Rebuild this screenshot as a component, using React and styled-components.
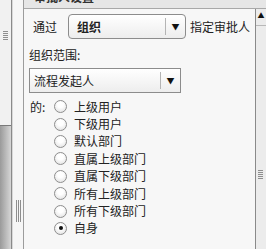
import React from "react";
import styled, { createGlobalStyle } from "styled-components";

const Global = createGlobalStyle`
  html, body { margin: 0; padding: 0; background: #f7f7f7; }
  body { font-family: "Noto Sans CJK SC", "Noto Sans", sans-serif; }
`;

const Frame = styled.div`
  width: 266px;
  height: 249px;
  display: flex;
  overflow: hidden;
  font-size: 12px;
  color: #222;
`;

const LeftDock = styled.div`
  width: 11px;
  display: flex;
  flex-direction: column;
  border-right: 1px solid #8a8a8a;
`;

const DockPanel = styled.div`
  height: 125px;
  background: #f1f1f1;
  border-bottom: 1px solid #7a7a7a;
  position: relative;
`;

const DockRest = styled.div`
  flex: 1;
  background: linear-gradient(to right, #9a9a9a, #d6d6d6);
`;

const GripH = styled.div`
  position: absolute;
  left: ${(p) => p.$x}px;
  top: ${(p) => p.$y}px;
  width: ${(p) => p.$w}px;
  height: 9px;
  background: repeating-linear-gradient(to bottom, #8e8e8e 0 1px, transparent 1px 2px);
`;

const GripV = styled.div`
  position: absolute;
  left: ${(p) => p.$x}px;
  top: ${(p) => p.$y}px;
  width: 5px;
  height: 22px;
  background: repeating-linear-gradient(to right, #8e8e8e 0 1px, transparent 1px 2px);
`;

const Gutter = styled.div`
  box-sizing: border-box;
  width: 12px;
  background: #f6f6f6;
  border-left: 1px solid #d8d8d8;
  border-right: 1px solid #9c9c9c;
  position: relative;
`;

const Window = styled.div`
  flex: 1;
  display: flex;
  flex-direction: column;
  min-width: 0;
`;

const Header = styled.div`
  height: 8px;
  background: #e6e6e6;
  border-bottom: 1px solid #a8a8a8;
  overflow: hidden;
  padding-left: 10px;
`;

const HeaderText = styled.div`
  font-weight: bold;
  font-size: 12px;
  line-height: 14px;
  margin-top: -10px;
  color: #333;
`;

const Body = styled.div`
  flex: 1;
  display: flex;
  min-height: 0;
`;

const Content = styled.div`
  flex: 1;
  background: #f7f7f7;
  padding-left: 5px;
  display: flex;
  flex-direction: column;
`;

const Row = styled.div`
  display: flex;
  align-items: center;
  height: 25px;
  margin-top: 5px;
  padding-left: ${(p) => p.$indent || 0}px;
`;

const Text = styled.span`
  line-height: 16px;
  white-space: nowrap;
`;

const Select = styled.div`
  box-sizing: border-box;
  width: ${(p) => p.$w}px;
  height: 25px;
  margin: ${(p) => p.$margin || "0"};
  border: 1px solid #8c8c8c;
  border-radius: ${(p) => (p.$round ? 4 : 0)}px;
  background: linear-gradient(to bottom, #ffffff, #ededed);
  display: flex;
  align-items: center;
`;

const SelectValue = styled.span`
  flex: 1;
  padding-left: ${(p) => p.$pad}px;
  font-weight: ${(p) => (p.$bold ? "bold" : "normal")};
  white-space: nowrap;
`;

const SelectArrow = styled.span`
  width: 19px;
  height: 17px;
  border-left: 1px solid #b4b4b4;
  display: flex;
  align-items: center;
  justify-content: center;
  font-size: 8px;
  color: #111;
`;

const Label = styled.div`
  margin-top: 8px;
  line-height: 16px;
`;

const RadioGroup = styled.div`
  margin-top: 5px;
  display: flex;
`;

const GroupLabel = styled.div`
  width: 24px;
  height: 17.4px;
  line-height: 17.4px;
  padding-left: 1px;
`;

const Options = styled.div`
  display: flex;
  flex-direction: column;
`;

const Option = styled.div`
  height: 17.4px;
  display: flex;
  align-items: center;
  gap: 7px;
`;

const Circle = styled.span`
  box-sizing: border-box;
  width: 13px;
  height: 13px;
  border-radius: 50%;
  border: 1px solid #8e8e8e;
  background: radial-gradient(circle at 50% 35%, #ffffff 30%, #dcdcdc 100%);
  display: flex;
  align-items: center;
  justify-content: center;
  &::after {
    content: "";
    width: 4px;
    height: 4px;
    border-radius: 50%;
    background: ${(p) => (p.$checked ? "#111" : "transparent")};
  }
`;

const Scrollbar = styled.div`
  width: 10px;
  border-left: 1px solid #8a8a8a;
  background: #ececec;
  position: relative;
`;

const ScrollUp = styled.div`
  height: 16px;
  border-bottom: 1px solid #b8b8b8;
  display: flex;
  align-items: flex-start;
  justify-content: center;
  font-size: 7px;
  line-height: 12px;
  color: #111;
`;

const options = [
  "上级用户",
  "下级用户",
  "默认部门",
  "直属上级部门",
  "直属下级部门",
  "所有上级部门",
  "所有下级部门",
  "自身",
];

export default function App() {
  return (
    <>
      <Global />
      <Frame>
        <LeftDock>
          <DockPanel>
            <GripH $x={3} $y={31} $w={5} />
          </DockPanel>
          <DockRest />
        </LeftDock>
        <Gutter>
          <GripV $x={3} $y={200} />
        </Gutter>
        <Window>
          <Header>
            <HeaderText>审批人设置</HeaderText>
          </Header>
          <Body>
            <Content>
              <Row $indent={4}>
                <Text>通过</Text>
                <Select $w={118} $round $margin="0 4px 0 11px">
                  <SelectValue $pad={8} $bold>组织</SelectValue>
                  <SelectArrow>▼</SelectArrow>
                </Select>
                <Text>指定审批人</Text>
              </Row>
              <Label>组织范围:</Label>
              <Row>
                <Select $w={152}>
                  <SelectValue $pad={4}>流程发起人</SelectValue>
                  <SelectArrow>▼</SelectArrow>
                </Select>
              </Row>
              <RadioGroup>
                <GroupLabel>的:</GroupLabel>
                <Options>
                  {options.map((o) => (
                    <Option key={o}>
                      <Circle $checked={o === "自身"} />
                      <Text>{o}</Text>
                    </Option>
                  ))}
                </Options>
              </RadioGroup>
            </Content>
            <Scrollbar>
              <ScrollUp>▲</ScrollUp>
              <GripH $x={2} $y={161} $w={5} />
            </Scrollbar>
          </Body>
        </Window>
      </Frame>
    </>
  );
}
